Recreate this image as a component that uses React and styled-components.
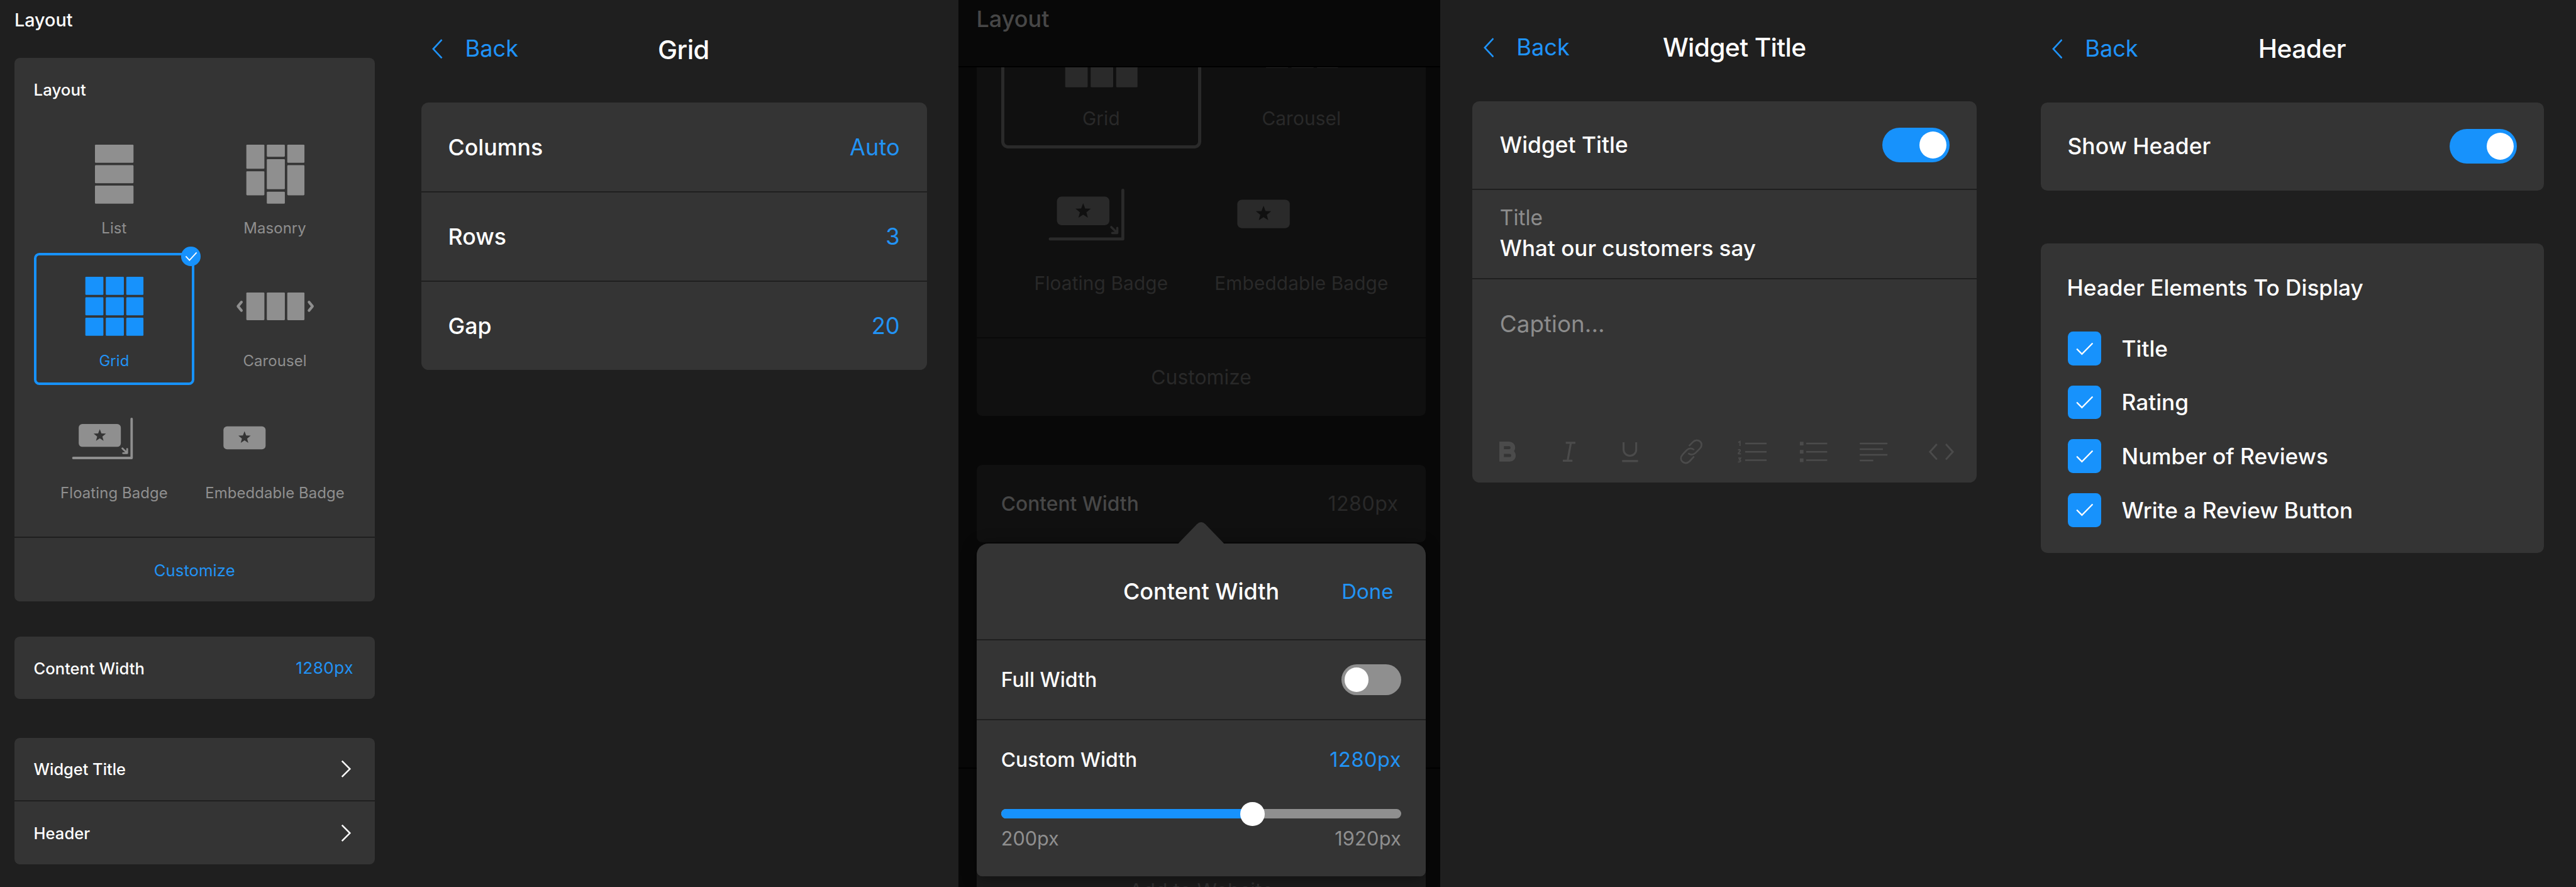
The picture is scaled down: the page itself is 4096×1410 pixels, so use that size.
import React from "react";
import styled, { createGlobalStyle, css } from "styled-components";

/* 1rem is ten design pixels on a 4278px wide artboard. */
const GlobalStyle = createGlobalStyle`
  *, *::before, *::after { box-sizing: border-box; }
  html { font-size: calc(100vw / 427.8); }
  body {
    margin: 0;
    background: #1f1f1f;
    font-family: Inter, Roboto, "Liberation Sans", sans-serif;
    overflow: hidden;
  }
`;

const normalPalette = css`
  --card: #343434;
  --line: #1f1f1f;
  --text: #ffffff;
  --value: #2293f5;
  --muted: #8f8f8f;
  --shape: #8f8f8f;
  --active: #1792fc;
  --active-text: #2293f5;
`;

const dimmedPalette = css`
  --card: #101010;
  --line: #090909;
  --text: #474747;
  --value: #292929;
  --muted: #292929;
  --shape: #2a2a2a;
  --active: #2a2a2a;
  --active-text: #292929;
`;

const Board = styled.main`
  display: flex;
  width: 427.8rem;
  height: 147.3rem;
  background: #1f1f1f;
  overflow: hidden;
`;

const Panel = styled.section`
  ${normalPalette}
  display: flex;
  flex-direction: column;
  flex: none;
  width: ${(p) => p.$width}rem;
  padding: ${(p) => p.$padding};
`;

const Card = styled.div`
  flex: none;
  background: var(--card);
  border-radius: ${(p) => p.$radius || 0.9}rem;
  margin-top: ${(p) => p.$gap || 0}rem;

  & > * + [data-divided] {
    border-top: 0.23rem solid var(--line);
  }
`;

const Row = styled.div`
  display: flex;
  align-items: center;
  justify-content: ${(p) => (p.$center ? "center" : "space-between")};
  box-sizing: content-box;
  height: ${(p) => p.$height}rem;
  padding: 0 ${(p) => p.$right ?? p.$pad}rem 0 ${(p) => p.$pad}rem;
`;

const Label = styled.span`
  padding-top: 0.15rem;
  font-size: ${(p) => p.$size}rem;
  font-weight: 500;
  line-height: 1.3;
  white-space: nowrap;
  color: var(--text);
`;

const Value = styled(Label)`
  font-weight: 400;
  letter-spacing: ${(p) => p.$spacing || 0}em;
  color: var(--value);
`;

const PageHeading = styled.h1`
  display: flex;
  align-items: center;
  flex: none;
  margin: 0;
  height: ${(p) => p.$height}rem;
  font-size: ${(p) => p.$size}rem;
  font-weight: 500;
  color: var(--text);
`;

/* ---------- layout picker ---------- */

const CardTitle = styled.div`
  display: flex;
  align-items: center;
  height: ${(p) => p.$height}rem;
  padding-left: ${(p) => p.$pad}rem;
`;

const TileGrid = styled.div`
  display: grid;
  grid-template-columns: 1fr 1fr;
  grid-auto-rows: 8.79em;
  font-size: ${(p) => p.$size}rem;
  padding: 0 ${(p) => p.$pad}rem ${(p) => p.$bottom}rem;
`;

const TileBox = styled.div`
  position: relative;
  display: flex;
  flex-direction: column;
  align-items: center;
  padding-top: ${(p) => (p.$active ? 1.44 : 1.6)}em;
  border: ${(p) => (p.$active ? "0.168em solid var(--active)" : "none")};
  border-radius: 0.36em;
  color: ${(p) => (p.$active ? "var(--active)" : "var(--shape)")};
`;

const TileArt = styled.svg`
  display: block;
  flex: none;
  width: 7.2em;
  height: 3.92em;
`;

const TileLabel = styled.span`
  margin-top: 1.08em;
  line-height: 1.2em;
  white-space: nowrap;
  letter-spacing: 0.004em;
  color: ${(p) => (p.$active ? "var(--active-text)" : "var(--muted)")};
`;

const SelectedBadge = styled.span`
  position: absolute;
  top: -0.57em;
  right: -0.57em;
  display: grid;
  place-items: center;
  width: 1.28em;
  height: 1.28em;
  border-radius: 50%;
  background: var(--active);
`;

const BadgeCheck = styled.svg`
  width: 0.84em;
  height: 0.64em;
`;

const Star = ({ x, y }) => (
  <path
    transform={`translate(${x} ${y})`}
    fill="var(--card)"
    d="M0-10.4 2.7-3.2 10.2-3 4.3 1.8 6.3 9 0 4.9-6.3 9-4.3 1.8-10.2-3-2.7-3.2Z"
  />
);

const blocks = {
  list: [
    [58.5, 0, 64, 30],
    [58.5, 34, 64, 30],
    [58.5, 68, 64, 30],
  ],
  masonry: [
    [42.5, 0, 30, 40],
    [42.5, 44, 30, 40],
    [76.5, 0, 30, 20],
    [76.5, 24, 30, 50],
    [76.5, 78, 30, 20],
    [110.5, 0, 28.5, 30],
    [110.5, 34, 28.5, 50],
  ],
  grid: [0, 34, 68].flatMap((y) => [
    [42.5, y, 30, 30],
    [76.5, y, 30, 30],
    [110.5, y, 28.5, 30],
  ]),
  carousel: [
    [42.5, 26, 30, 46],
    [76.5, 26, 30, 46],
    [110.5, 26, 28.5, 46],
  ],
};

function Art({ kind }) {
  const line = { fill: "none", stroke: "currentColor", strokeLinecap: "round" };
  return (
    <TileArt viewBox="0 0 180 98" fill="currentColor">
      {(blocks[kind] || []).map(([x, y, w, h]) => (
        <rect key={`${x}-${y}`} x={x} y={y} width={w} height={h} rx="1.4" />
      ))}
      {kind === "carousel" && (
        <g {...line} strokeWidth="4.4" strokeLinejoin="round">
          <path d="M34.4 42 28.6 49l5.8 7" />
          <path d="M146.6 42l5.8 7-5.8 7" />
        </g>
      )}
      {kind === "floating" && (
        <>
          <rect x="31.5" y="24" width="70" height="38" rx="6" />
          <Star x={66.5} y={43} />
          <path {...line} strokeWidth="4" strokeLinejoin="round" d="M119.4 15.5V80.4H22.5" />
          <path
            {...line}
            strokeWidth="3"
            strokeLinejoin="round"
            d="M104 64.5l7.6 7.4M112 65.6v6.8h-6.8"
          />
        </>
      )}
      {kind === "embeddable" && (
        <>
          <rect x="4.5" y="28" width="70" height="38" rx="6" />
          <Star x={39.5} y={46.4} />
        </>
      )}
    </TileArt>
  );
}

function Tile({ kind, label, active, badge }) {
  return (
    <TileBox $active={active}>
      <Art kind={kind} />
      <TileLabel $active={active}>{label}</TileLabel>
      {badge && (
        <SelectedBadge>
          <BadgeCheck viewBox="0 0 21 16" fill="none" stroke="#fff" strokeWidth="1.9">
            <path d="M1.5 7.8 7.6 14.2 19.5 1.5" />
          </BadgeCheck>
        </SelectedBadge>
      )}
    </TileBox>
  );
}

/* ---------- sub-page header ---------- */

const SubHeader = styled.header`
  display: grid;
  grid-template-columns: 1fr auto 1fr;
  align-items: center;
  flex: none;
  height: 14rem;
  margin: 0 -3.3rem 1.9rem 0;
  padding-left: 1.8rem;
`;

const BackLink = styled.a`
  display: flex;
  align-items: center;
  gap: 3.75rem;
  color: #1f93fa;
  font-size: 3.78rem;
  line-height: 1.2;
`;

const BackArrow = styled.svg`
  width: 1.75rem;
  height: 3.3rem;
`;

const SubTitle = styled.h2`
  margin: 0 1.9rem 0 0;
  padding-top: 0.25rem;
  font-size: ${(p) => p.$size}rem;
  font-weight: 500;
  letter-spacing: ${(p) => p.$spacing}em;
  line-height: 1.2;
  white-space: nowrap;
  color: #fff;
`;

function PageHeader({ title, size = 4.25, spacing = -0.013 }) {
  return (
    <SubHeader>
      <BackLink>
        <BackArrow viewBox="0 0 17.5 33" fill="none" stroke="currentColor" strokeWidth="2.8">
          <path d="M16.2 1.2 2 16.5 16.2 31.8" />
        </BackArrow>
        Back
      </BackLink>
      <SubTitle $size={size} $spacing={spacing}>
        {title}
      </SubTitle>
    </SubHeader>
  );
}

/* ---------- controls ---------- */

const Toggle = styled.span`
  display: flex;
  align-items: center;
  flex: none;
  justify-content: ${(p) => (p.$on ? "flex-end" : "flex-start")};
  width: 2.455em;
  height: 1.25em;
  padding: 0 0.11em;
  border-radius: 0.63em;
  font-size: ${(p) => p.$knob}rem;
  background: ${(p) => (p.$on ? "#1792fc" : "#8f8f8f")};

  &::after {
    content: "";
    width: 1em;
    height: 1em;
    border-radius: 50%;
    background: #fff;
  }
`;

const RowArrow = styled.svg`
  width: 1.7rem;
  height: 3rem;
`;

const NextArrow = () => (
  <RowArrow viewBox="0 0 17 30" fill="none" stroke="#fff" strokeWidth="2.6">
    <path d="M1.8 1.8 15 15 1.8 28.2" />
  </RowArrow>
);

/* ---------- content width panel ---------- */

const DimPanel = styled.section`
  ${dimmedPalette}
  position: relative;
  display: flex;
  flex-direction: column;
  flex: none;
  width: 80rem;
  height: 147.3rem;
  background: #080808;
  overflow: hidden;
`;

const DimTop = styled.div`
  flex: none;
  height: 11.2rem;
  padding: 0 2.95rem;
  border-bottom: 0.3rem solid #000;
`;

const Scroller = styled.div`
  flex: 1;
  min-height: 0;
  padding: 0 2.4rem 0 3rem;
  overflow: hidden;
`;

const Scrolled = styled.div`
  margin-top: -13.9rem;
`;

const DimFooter = styled.div`
  display: flex;
  flex: none;
  height: 19.9rem;
  padding: 16.5rem 2.4rem 0 3rem;
  border-top: 0.3rem solid #000;
`;

const FooterButton = styled.div`
  display: flex;
  align-items: center;
  justify-content: center;
  flex: 1;
  height: 7.5rem;
  background: #1b1b1b;
  color: #303030;
  font-size: 3.33rem;
  white-space: nowrap;
`;

const Popover = styled.div`
  ${normalPalette}
  position: absolute;
  top: 90.2rem;
  left: 3rem;
  width: 74.6rem;
  height: 55.3rem;
  border-radius: 1.9rem 1.9rem 0.9rem 0.9rem;
  background: var(--card);
  box-shadow: 0 0.3rem 2.6rem rgba(0, 0, 0, 0.4);
`;

const PopoverTip = styled.svg`
  position: absolute;
  top: -3.55rem;
  left: 33.4rem;
  width: 7.7rem;
  height: 3.6rem;
`;

const PopoverHeader = styled.div`
  display: grid;
  grid-template-columns: 1fr auto 1fr;
  align-items: center;
  height: 15.9rem;
  padding: 0 5.4rem;

  & > :last-child {
    justify-self: end;
  }
`;

const PopoverRow = styled(Row)`
  border-top: 0.22rem solid var(--line);
`;

const WidthSection = styled.div`
  padding: 3.45rem 4.1rem 0 4.05rem;
  border-top: 0.22rem solid var(--line);
`;

const Slider = styled.div`
  position: relative;
  display: flex;
  align-items: center;
  height: 4.05rem;
  margin-top: 4.1rem;
`;

const SliderTrack = styled.div`
  width: 100%;
  height: 1.55rem;
  border-radius: 0.78rem;
  background: #8f8f8f;
  overflow: hidden;
`;

const SliderFill = styled.div`
  height: 100%;
  background: #1792fc;
`;

const SliderThumb = styled.div`
  position: absolute;
  width: 4.05rem;
  height: 4.05rem;
  margin-left: -2.02rem;
  border-radius: 50%;
  background: #fff;
`;

const Limit = styled(Value)`
  padding-top: 0;
  color: var(--muted);
`;

/* ---------- widget title panel ---------- */

const Field = styled.div`
  display: flex;
  flex-direction: column;
  box-sizing: content-box;
  height: ${(p) => p.$height}rem;
`;

const FieldLine = styled.span`
  padding-left: 4.53rem;
  font-size: ${(p) => p.$size}rem;
  font-weight: ${(p) => (p.$muted ? 400 : 500)};
  line-height: ${(p) => p.$line}rem;
  margin-top: ${(p) => p.$top || 0}rem;
  color: ${(p) => (p.$muted ? "#8c8c8c" : "#fff")};
`;

const Toolbar = styled.div`
  display: flex;
  justify-content: space-between;
  margin-top: auto;
  padding: 0 0.85rem;
`;

const ToolGroup = styled.div`
  display: flex;
`;

const Tool = styled.span`
  display: grid;
  place-items: center;
  width: 10.12rem;
  height: 10.1rem;
  color: #4b4b4b;
`;

const ToolArt = styled.svg`
  width: 5rem;
  height: 5rem;
`;

const tools = [
  <path
    key="b"
    strokeWidth="7.6"
    d="M14.3 12.2h12.4a6.2 6.2 0 0 1 0 12.6H14.3zM14.3 24.8h13.2a6.4 6.4 0 0 1 0 13H14.3z"
  />,
  <path key="i" strokeWidth="3.4" d="M19.5 10.4h16M14.6 40h16M28 10.4 22.6 40" />,
  <path key="u" strokeWidth="3.2" d="M14.2 9.5v12.3a10 9.6 0 0 0 21 0V9.5M11.8 40.6h26.4" />,
  <path
    key="l"
    strokeWidth="2.8"
    strokeLinejoin="round"
    d="M21.5 15.5 28 9c4-4 9-3.6 12-.8s3.6 7.6-.5 11.8l-7 7c-4 4-9.5 3.6-12.2 .6M30 33l-7.5 8c-4 4-9 3.6-12 .6s-3.4-7.8 .6-12l6.6-7c4-4 9.6-3.6 12.2-.4"
  />,
  <g key="ol" strokeWidth="2.6">
    <path d="M13.5 11.6h36M13.5 25.3h36M13.5 39.2h36" />
    <path
      strokeWidth="2"
      d="M2 9.8l3-1.8v7.6M1.4 28.6h5.2M1.8 22.6c2-2 4.4-.6 3.2 1.6l-3.4 4.2M2 35.8h4l-2 3c3.2 .4 2.6 4-2.4 3.2"
    />
  </g>,
  <g key="ul" strokeWidth="2.6">
    <path d="M13.5 11.6H48.5M13.5 25.3H48.5M13.5 39.2H48.5" />
    <path strokeWidth="6" d="M3 11.6h6M3 25.3h6M3 39.2h6" />
  </g>,
  <path
    key="al"
    strokeWidth="2.6"
    d="M2.2 11.6h46M2.2 21h38.5M2.2 30.3h46M2.2 39.6h22.5"
  />,
];

const codeTool = (
  <path strokeWidth="3" d="M17.5 12.5 6 25.3l11.5 12.7M32.5 12.5 44 25.3 32.5 38" />
);

const ToolIcon = ({ children }) => (
  <Tool>
    <ToolArt viewBox="0 0 50 50" fill="none" stroke="currentColor">
      {children}
    </ToolArt>
  </Tool>
);

/* ---------- header panel ---------- */

const Checklist = styled.ul`
  display: flex;
  flex-direction: column;
  gap: 3.34rem;
  margin: 0;
  padding: 0 0 4.35rem 4.44rem;
  list-style: none;
`;

const CheckItem = styled.li`
  display: flex;
  align-items: center;
  gap: 3.4rem;
  height: 5.6rem;
`;

const CheckBox = styled.span`
  display: grid;
  place-items: center;
  width: 5.55rem;
  height: 5.6rem;
  border-radius: 0.85rem;
  background: #1792fc;
`;

const CheckMark = styled.svg`
  width: 2.9rem;
  height: 2.2rem;
`;

const elements = ["Title", "Rating", "Number of Reviews", "Write a Review Button"];
const gridSettings = [
  ["Columns", "Auto"],
  ["Rows", "3"],
  ["Gap", "20"],
];

const range = { min: 200, max: 1920, value: 1280 };

function LayoutPanel() {
  return (
    <Panel $width={66} $padding="0 3.8rem 0 2.4rem">
      <PageHeading $height={6.6} $size={3}>
        Layout
      </PageHeading>
      <Card $gap={3}>
        <CardTitle $height={10.4} $pad={3.2}>
          <Label $size={2.7}>Layout</Label>
        </CardTitle>
        <TileGrid $size={2.5} $pad={3.2} $bottom={3.2}>
          <Tile kind="list" label="List" />
          <Tile kind="masonry" label="Masonry" />
          <Tile kind="grid" label="Grid" active badge />
          <Tile kind="carousel" label="Carousel" />
          <Tile kind="floating" label="Floating Badge" />
          <Tile kind="embeddable" label="Embeddable Badge" />
        </TileGrid>
        <Row $height={10.5} $pad={3.2} $center data-divided>
          <Value $size={2.69}>Customize</Value>
        </Row>
      </Card>
      <Card $gap={5.9}>
        <Row $height={10.35} $pad={3.2} $right={3.52}>
          <Label $size={2.67}>Content Width</Label>
          <Value $size={2.74} $spacing={0.015}>
            1280px
          </Value>
        </Row>
      </Card>
      <Card $gap={6.45}>
        <Row $height={10.36} $pad={3.2} $right={3.85}>
          <Label $size={2.65}>Widget Title</Label>
          <NextArrow />
        </Row>
        <Row $height={10.36} $pad={3.2} $right={3.85} data-divided>
          <Label $size={2.67}>Header</Label>
          <NextArrow />
        </Row>
      </Card>
    </Panel>
  );
}

function GridPanel() {
  return (
    <Panel $width={93.2} $padding="1.17rem 5.3rem 0 3.94rem">
      <PageHeader title="Grid" size={4.35} />
      <Card $radius={1.2}>
        {gridSettings.map(([name, value]) => (
          <Row key={name} $height={14.64} $pad={4.48} data-divided>
            <Label $size={3.73}>{name}</Label>
            <Value $size={3.78}>{value}</Value>
          </Row>
        ))}
      </Card>
    </Panel>
  );
}

function ContentWidthPanel() {
  const position = `${((range.value - range.min) / (range.max - range.min)) * 100}%`;
  return (
    <DimPanel>
      <DimTop>
        <PageHeading $height={6.2} $size={3.76}>
          Layout
        </PageHeading>
      </DimTop>
      <Scroller>
        <Scrolled>
          <Card>
            <TileGrid $size={3.114} $pad={4.03} $bottom={3.9}>
              <Tile kind="grid" label="Grid" active />
              <Tile kind="carousel" label="Carousel" />
              <Tile kind="floating" label="Floating Badge" />
              <Tile kind="embeddable" label="Embeddable Badge" />
            </TileGrid>
            <Row $height={12.9} $pad={4} $center data-divided>
              <Value $size={3.33}>Customize</Value>
            </Row>
          </Card>
          <Card $gap={8.1}>
            <Row $height={12.9} $pad={4.05} $right={4.55}>
              <Label $size={3.32}>Content Width</Label>
              <Value $size={3.36} $spacing={0.015}>
                1280px
              </Value>
            </Row>
          </Card>
        </Scrolled>
      </Scroller>
      <DimFooter>
        <FooterButton>Add to Website</FooterButton>
      </DimFooter>
      <Popover>
        <PopoverTip viewBox="0 0 77 36">
          <path d="M0 36 31.5 3.5Q38.5-3.4 45.5 3.5L77 36Z" fill="var(--card)" />
        </PopoverTip>
        <PopoverHeader>
          <span />
          <Label $size={3.76}>Content Width</Label>
          <Value $size={3.45}>Done</Value>
        </PopoverHeader>
        <PopoverRow $height={13.05} $pad={4.05} $right={4.05}>
          <Label $size={3.35}>Full Width</Label>
          <Toggle $knob={4.05} />
        </PopoverRow>
        <WidthSection>
          <Row $height={6} $pad={0}>
            <Label $size={3.33}>Custom Width</Label>
            <Value $size={3.4} $spacing={0.015}>
              1280px
            </Value>
          </Row>
          <Slider>
            <SliderTrack>
              <SliderFill style={{ width: position }} />
            </SliderTrack>
            <SliderThumb style={{ left: position }} />
          </Slider>
          <Row $height={4.2} $pad={0}>
            <Limit $size={3.2}>200px</Limit>
            <Limit $size={3.22} $spacing={0.005}>
              1920px
            </Limit>
          </Row>
        </WidthSection>
      </Popover>
    </DimPanel>
  );
}

function WidgetTitlePanel() {
  return (
    <Panel $width={94.8} $padding="0.9rem 5.7rem 0 5.35rem">
      <PageHeader title="Widget Title" spacing={-0.015} />
      <Card $radius={1.2}>
        <Row $height={14.55} $pad={4.53}>
          <Label $size={3.69}>Widget Title</Label>
          <Toggle $on $knob={4.55} />
        </Row>
        <Field $height={14.65} data-divided>
          <FieldLine $size={3.5} $line={5.06} $top={2.08} $muted>
            Title
          </FieldLine>
          <FieldLine $size={3.66} $line={5.06}>
            What our customers say
          </FieldLine>
        </Field>
        <Field $height={33.65} data-divided>
          <FieldLine $size={3.85} $line={4.8} $top={4.98} $muted>
            Caption...
          </FieldLine>
          <Toolbar>
            <ToolGroup>
              {tools.map((art) => (
                <ToolIcon key={art.key}>{art}</ToolIcon>
              ))}
            </ToolGroup>
            <ToolIcon>{codeTool}</ToolIcon>
          </Toolbar>
        </Field>
      </Card>
    </Panel>
  );
}

function HeaderPanel() {
  return (
    <Panel $width={93.8} $padding="1.1rem 5.34rem 0 4.96rem">
      <PageHeader title="Header" />
      <Card $radius={1.1}>
        <Row $height={14.6} $pad={4.4} $right={4.45}>
          <Label $size={3.7}>Show Header</Label>
          <Toggle $on $knob={4.55} />
        </Row>
      </Card>
      <Card $radius={1.1} $gap={8.87}>
        <CardTitle $height={14.6} $pad={4.3}>
          <Label $size={3.68}>Header Elements To Display</Label>
        </CardTitle>
        <Checklist>
          {elements.map((name) => (
            <CheckItem key={name}>
              <CheckBox>
                <CheckMark viewBox="0 0 29 22" fill="none" stroke="#fff" strokeWidth="2.4">
                  <path d="M1.2 11 9.8 19.6 27.6 1.6" />
                </CheckMark>
              </CheckBox>
              <Label $size={3.68}>{name}</Label>
            </CheckItem>
          ))}
        </Checklist>
      </Card>
    </Panel>
  );
}

export default function App() {
  return (
    <>
      <GlobalStyle />
      <Board>
        <LayoutPanel />
        <GridPanel />
        <ContentWidthPanel />
        <WidgetTitlePanel />
        <HeaderPanel />
      </Board>
    </>
  );
}
